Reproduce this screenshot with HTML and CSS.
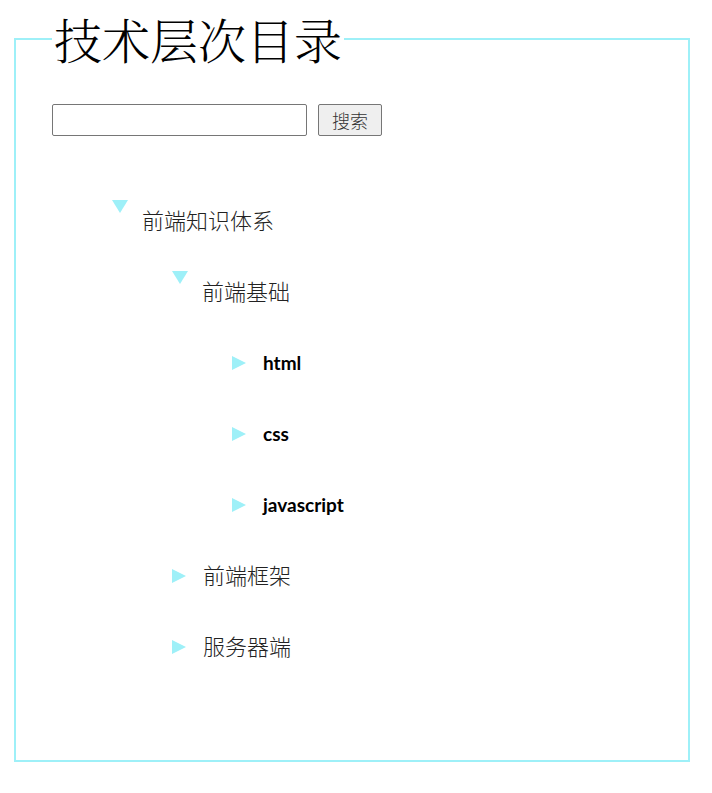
FILE: index.html
```html
<!DOCTYPE html>
<html lang="zh">
<head>
<meta charset="utf-8">
<title>技术层次目录</title>
<link rel="stylesheet" href="styles.css">
</head>
<body>
<fieldset class="panel">
  <legend class="panel-title">技术层次目录</legend>
  <form class="search">
    <input class="search-input" type="text">
    <button class="search-btn" type="button">搜索</button>
  </form>
  <ul class="tree">
    <li class="node">
      <div class="row"><span class="arrow down"></span><span class="label">前端知识体系</span></div>
      <ul class="tree">
        <li class="node">
          <div class="row"><span class="arrow down"></span><span class="label">前端基础</span></div>
          <ul class="tree">
            <li class="node"><div class="row"><span class="arrow right"></span><span class="label en">html</span></div></li>
            <li class="node"><div class="row"><span class="arrow right"></span><span class="label en">css</span></div></li>
            <li class="node"><div class="row"><span class="arrow right"></span><span class="label en">javascript</span></div></li>
          </ul>
        </li>
        <li class="node"><div class="row"><span class="arrow right"></span><span class="label">前端框架</span></div></li>
        <li class="node"><div class="row"><span class="arrow right"></span><span class="label">服务器端</span></div></li>
      </ul>
    </li>
  </ul>
</fieldset>
</body>
</html>
```
FILE: styles.css
```css
html, body {
  margin: 0;
  padding: 0;
  background: #fff;
}
body {
  font-family: "Noto Sans CJK SC", "Noto Sans", sans-serif;
  color: #222;
}
.panel {
  margin: 15px 22px 0 14px;
  padding: 0 36px 77px 36px;
  border: 2px solid #9ef0f8;
  min-width: 0;
}
.panel-title {
  padding: 0 2px;
  font-family: "Noto Serif CJK SC", "Noto Sans CJK SC", serif;
  font-weight: 300;
  font-size: 48px;
  line-height: 48px;
  color: #000;
}
.search {
  display: flex;
  align-items: center;
  gap: 11px;
  margin: 41px 0 0 0;
}
.search-input {
  box-sizing: border-box;
  width: 255px;
  height: 32px;
  margin: 0;
  border: 1px solid #767676;
  border-radius: 2px;
  padding: 1px 2px;
}
.search-btn {
  box-sizing: border-box;
  width: 64px;
  height: 32px;
  margin: 0;
  border: 1px solid #767676;
  border-radius: 2px;
  background: #efefef;
  font-family: "Noto Sans CJK SC", sans-serif;
  font-weight: 300;
  font-size: 18px;
  color: #333;
  padding: 0;
}
.tree {
  list-style: none;
  margin: 0;
  padding: 0 0 0 60px;
}
.panel > .tree {
  margin-top: 50px;
}
.row {
  display: flex;
  align-items: center;
  height: 71px;
}
.arrow {
  flex: none;
  width: 0;
  height: 0;
}
.arrow.down {
  border-left: 8.5px solid transparent;
  border-right: 8.5px solid transparent;
  border-top: 13px solid #9ef0f8;
  margin-right: 14px;
  margin-bottom: 31px;
}
.arrow.right {
  border-top: 7.5px solid transparent;
  border-bottom: 7.5px solid transparent;
  border-left: 14px solid #9ef0f8;
  margin-right: 17px;
  margin-bottom: 2px;
}
.label {
  font-size: 22px;
  line-height: 30px;
  font-weight: 300;
  color: #222;
  margin-bottom: 6px;
}
.label.en {
  font-family: Lato, "Open Sans", sans-serif;
  font-weight: 700;
  font-size: 19px;
  color: #000;
  margin-bottom: 2px;
}
```
